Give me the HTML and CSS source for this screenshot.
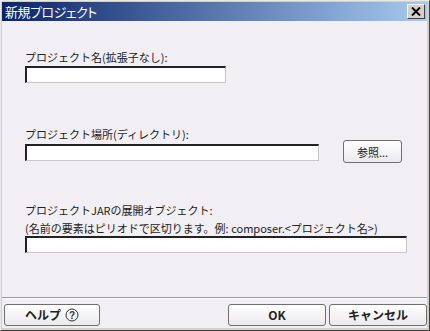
FILE: index.html
```html
<!DOCTYPE html>
<html lang="ja">
<head>
  <meta charset="UTF-8" />
  <title>新規プロジェクト</title>
  <link rel="stylesheet" href="styles.css">
</head>
<body>
  <div class="window">
    <div class="titlebar">
      <span class="title">新規プロジェクト</span>
      <button class="close-btn">
        <svg width="10" height="9" viewBox="0 0 10 9">
          <path d="M1 0.5 L9 8.5 M9 0.5 L1 8.5" stroke="#000" stroke-width="2" />
        </svg>
      </button>
    </div>

    <main class="content">
      <div class="field field-name">
        <label>プロジェクト名(拡張子なし):</label>
        <input type="text" class="input input-name" />
      </div>

      <div class="field field-dir">
        <label>プロジェクト場所(ディレクトリ):</label>
        <div class="row">
          <input type="text" class="input input-dir" />
          <button class="btn btn-browse">参照...</button>
        </div>
      </div>

      <div class="field field-pkg">
        <label>プロジェクトJARの展開オブジェクト:</label>
        <label class="hint">(名前の要素はピリオドで区切ります。例: composer.&lt;プロジェクト名&gt;)</label>
        <input type="text" class="input input-pkg" />
      </div>
    </main>

    <footer class="footer">
      <button class="btn btn-help">ヘルプ
        <svg width="14" height="14" viewBox="0 0 14 14">
          <circle cx="7" cy="7" r="6" fill="none" stroke="#333" stroke-width="1" />
          <text x="7" y="10.5" text-anchor="middle" font-size="10" font-family="Liberation Sans, sans-serif" fill="#333">?</text>
        </svg>
      </button>
      <div class="spacer"></div>
      <button class="btn btn-ok">OK</button>
      <button class="btn btn-cancel">キャンセル</button>
    </footer>
  </div>
</body>
</html>
```

FILE: styles.css
```css
body {
  margin: 0;
  font-family: "Noto Sans CJK JP", "Liberation Sans", sans-serif;
  font-size: 11px;
  color: #000;
  background: #d4d0c8;
}

.window {
  box-sizing: border-box;
  width: 430px;
  height: 331px;
  display: flex;
  flex-direction: column;
  background: #d4d0c8;
  border-style: solid;
  border-width: 1px;
  border-color: #e8e8e8 #404040 #404040 #e8e8e8;
  padding: 1px 2px 2px 1px;
}

.titlebar {
  height: 19px;
  display: flex;
  align-items: center;
  justify-content: space-between;
  padding: 0 2px 0 3px;
  background: linear-gradient(to right, #0a246a, #a6caf0);
}

.title {
  color: #fff;
  font-size: 13px;
  font-feature-settings: "palt";
  letter-spacing: -0.5px;
}

.close-btn {
  box-sizing: border-box;
  width: 18px;
  height: 15px;
  padding: 0;
  display: flex;
  align-items: center;
  justify-content: center;
  background: #d4d0c8;
  border-style: solid;
  border-width: 1px;
  border-color: #fff #404040 #404040 #fff;
}

.content {
  flex: 1;
  background: #f1eff4;
  padding: 29px 0 0 23px;
  border-bottom: 1px solid #9a9a9a;
}

.field {
  display: flex;
  flex-direction: column;
}

.field label {
  line-height: 15px;
  color: #222;
}

.field-dir {
  margin-top: 44px;
}

.field-pkg {
  margin-top: 39px;
}

.field-pkg label {
  line-height: 16px;
}

.field-pkg .hint {
  margin-top: 2px;
}

.row {
  display: flex;
  align-items: flex-start;
}

.input {
  box-sizing: border-box;
  height: 17px;
  margin: 1px 0 0;
  padding: 0;
  background: #fff;
  border-style: solid;
  border-width: 2px 1px 1px 2px;
  border-color: #222 #c8c8c8 #c8c8c8 #222;
}

.input-name {
  width: 201px;
}

.input-dir {
  width: 294px;
  margin-top: 2px;
}

.input-pkg {
  width: 382px;
  margin-top: 0;
}

.btn {
  box-sizing: border-box;
  font-family: "Noto Sans CJK JP", "Liberation Sans", sans-serif;
  background: linear-gradient(to bottom, #ffffff, #ebe9ec);
  border: 1px solid #6f6f6f;
  border-radius: 3px;
  color: #222;
  padding: 0;
}

.btn-browse {
  width: 59px;
  height: 23px;
  margin: -2px 0 0 24px;
  font-size: 11px;
}

.footer {
  display: flex;
  align-items: center;
  height: 27px;
  padding: 2px 0 0 2px;
  background: #f1eff4;
  border-top: 1px solid #fff;
}

.footer .btn {
  height: 22px;
  font-size: 12px;
  font-weight: bold;
}

.btn-help {
  width: 96px;
  display: flex;
  align-items: center;
  justify-content: center;
  gap: 4px;
}

.spacer {
  flex: 1;
}

.btn-ok {
  width: 98px;
}

.btn-cancel {
  width: 98px;
  margin-left: 3px;
}
```
